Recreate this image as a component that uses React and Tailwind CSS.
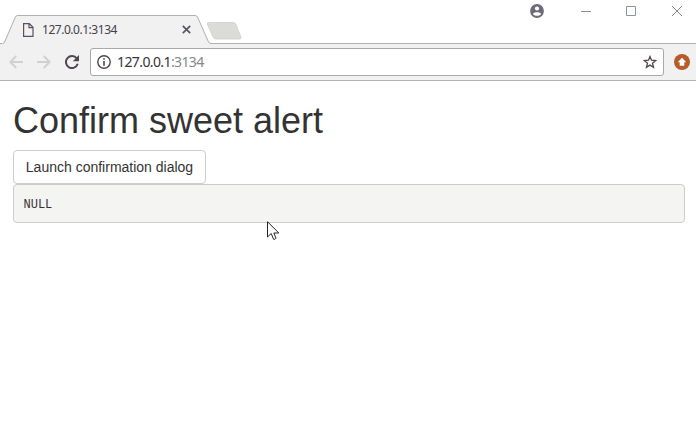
import React from "react";

function TabStrip() {
  return (
    <div className="relative flex h-11 w-full items-start">
      <svg className="absolute inset-0" width="696" height="44" viewBox="0 0 696 44">
        <path d="M0 43.5H3.5L15 17Q15.8 15.5 17.5 15.5H195Q197 15.5 197.8 17L208.7 42Q209.3 43.5 211 43.5H696V44H0Z" fill="#f1f1f1" />
        <path d="M0 43.5H2.5Q4 43.5 4.6 42L15.4 17Q16 15.5 17.8 15.5H195Q196.8 15.5 197.5 17L208.5 42Q209.2 43.5 211 43.5H696" fill="none" stroke="#b0b0b0" />
        <path d="M208.5 22.5H233Q235 22.5 235.8 24.3L241 37Q241.5 39 239.5 39H216Q213.8 39 213 37L207.3 24.2Q206.8 22.5 208.5 22.5Z" fill="#dbdbd9" stroke="#cfcfcf" strokeWidth="0.8" />
      </svg>
      <div className="relative mt-[15px] flex h-[29px] w-[209px] items-center pl-[23px]">
        <svg width="11" height="14" viewBox="0 0 11 14" fill="none" stroke="#5a5160" strokeWidth="1.2">
          <path d="M.6.6H6.3L10 4.3V13.4H.6ZM6 .8V4.6H9.8" />
        </svg>
        <span className="ml-2 w-[140px] text-[12px] leading-4 tracking-[-0.47px] text-[#45404a]">127.0.0.1:3134</span>
        <svg width="9" height="9" viewBox="0 0 9 9" stroke="#5a5560" strokeWidth="1.7">
          <path d="M.8.8L8.2 8.2M8.2.8L.8 8.2" />
        </svg>
      </div>
      <div className="relative ml-auto flex h-[22px] items-center">
        <svg className="mr-[37px]" width="14" height="14" viewBox="0 0 14 14">
          <circle cx="7" cy="7" r="6.9" fill="#6e6b78" />
          <circle cx="7" cy="4.5" r="2.1" fill="#fff" />
          <path d="M2.9 9.7C3.7 7.6 10.3 7.6 11.1 9.7C10 12.4 4 12.4 2.9 9.7Z" fill="#fff" />
        </svg>
        <svg className="mr-[35px]" width="10" height="10" viewBox="0 0 10 10" stroke="#8b8f97"><path d="M0 5.5H10" /></svg>
        <svg className="mr-[36px]" width="10" height="10" viewBox="0 0 10 10" fill="none" stroke="#8b9599"><path d="M.5.5H9.5V9.5H.5Z" /></svg>
        <svg className="mr-[14px]" width="10" height="10" viewBox="0 0 10 10" stroke="#85858d"><path d="M0 0L10 10M10 0L0 10" /></svg>
      </div>
    </div>
  );
}

function Toolbar() {
  return (
    <div className="flex h-[37px] items-center border-b border-[#b3b3b3] bg-[#f1f1f1] pl-[9px] pr-[6px]">
      <svg width="14" height="14" viewBox="0 0 14 14" fill="none" stroke="#d0d0d0" strokeWidth="1.9"><path d="M14 7H1.5M7.2 1L1.3 7L7.2 13" /></svg>
      <svg className="ml-[14px]" width="14" height="14" viewBox="0 0 14 14" fill="none" stroke="#d0d0d0" strokeWidth="1.9"><path d="M0 7H12.5M6.8 1L12.7 7L6.8 13" /></svg>
      <svg className="ml-[14px]" width="14" height="14" viewBox="0 0 14 14">
        <path d="M11.8 3.5A6 6 0 1 0 12.7 8.8" fill="none" stroke="#51464f" strokeWidth="2" />
        <path d="M14 0V6.2H7.8Z" fill="#51464f" />
      </svg>
      <div className="ml-[11px] flex h-7 w-[574px] items-center rounded-[3px] border border-[#a9a9a9] bg-white px-[6px]">
        <svg width="14" height="14" viewBox="0 0 14 14">
          <circle cx="7" cy="7" r="6.2" fill="none" stroke="#51464f" strokeWidth="1.4" />
          <path d="M6.2 3.2H7.8V4.8H6.2ZM6.2 6H7.8V10.7H6.2Z" fill="#51464f" />
        </svg>
        <span className="ml-[6px] text-[14px] leading-5 tracking-[-0.6px] text-[#38333a]">127.0.0.1<span className="text-[#83898a]">:3134</span></span>
        <svg className="ml-auto" width="14" height="14" viewBox="0 0 14 14" fill="none" stroke="#51464f" strokeWidth="1.3">
          <path d="M7 1.6L8.5 5.2L12.7 5.5L9.5 8.2L10.5 12.3L7 10.1L3.5 12.3L4.5 8.2L1.3 5.5L5.5 5.2Z" />
        </svg>
      </div>
      <svg className="ml-auto" width="16" height="16" viewBox="0 0 16 16">
        <circle cx="8" cy="8" r="8" fill="#b65c2b" />
        <path d="M8 3.7L12.2 8.2H10.3V11.7H5.7V8.2H3.8Z" fill="#fff" />
      </svg>
    </div>
  );
}

export default function App() {
  return (
    <div className="relative h-[421px] w-[696px] overflow-hidden bg-white font-['Noto_Sans',sans-serif]">
      <TabStrip />
      <Toolbar />
      <main className="flex flex-col items-start pl-[13px] pr-[11px] pt-5 font-['Liberation_Sans',Arial,sans-serif] text-[#333]">
        <h1 className="text-[36px] leading-[39px]">Confirm sweet alert</h1>
        <button className="mt-[10px] h-[34px] w-[193px] whitespace-nowrap rounded-[4px] border border-[#ccc] bg-white text-[14px] leading-5">Launch confirmation dialog</button>
        <pre className="h-[39px] w-full rounded-[4px] border border-[#ccc] bg-[#f4f4f3] px-[9.5px] pt-[10.5px] font-['Liberation_Mono',monospace] text-[12px] leading-[18px]">NULL</pre>
      </main>
      <svg className="absolute left-[267px] top-[221px]" width="13" height="20" viewBox="0 0 13 20">
        <path d="M.5.7V16L4.2 12.5L6.5 18.2Q8 19 9 17.2L6.8 12H11.8Z" fill="#fff" stroke="#25252d" strokeWidth="1" />
      </svg>
    </div>
  );
}
